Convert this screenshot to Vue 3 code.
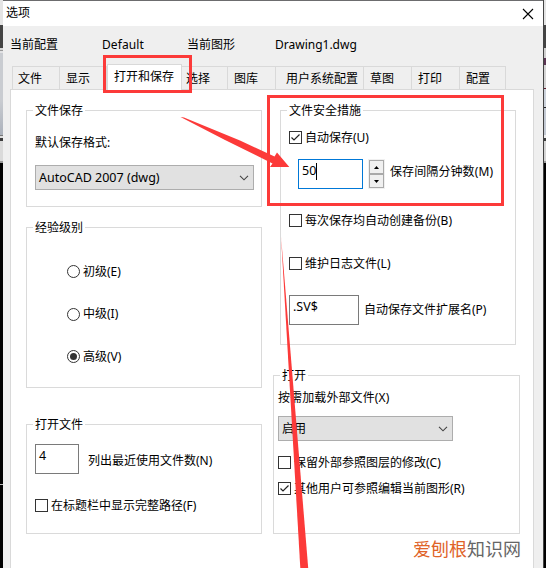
<script setup>
import { ref } from 'vue'

const tabs = [
  { label: '文件', cls: 't-file' },
  { label: '显示', cls: 't-view' },
  { label: '打开和保存', cls: 't-open active' },
  { label: '选择', cls: 't-select' },
  { label: '图库', cls: 't-gallery' },
  { label: '用户系统配置', cls: 't-user' },
  { label: '草图', cls: 't-draft' },
  { label: '打印', cls: 't-print' },
  { label: '配置', cls: 't-profile' },
]
const levels = ['初级(E)', '中级(I)', '高级(V)']
const level = ref('高级(V)')
</script>

<template>
  <div class="screen">
    <div class="edge edge-left"></div>
    <main class="dialog">
      <header class="title">
        <span>选项</span>
        <svg width="12" height="12" viewBox="0 0 12 12"><path d="M1 1L11 11M11 1L1 11" /></svg>
      </header>
      <div class="info">
        <span class="c1">当前配置</span><span class="c2">Default</span>
        <span class="c3">当前图形</span><span class="dwg">Drawing1.dwg</span>
      </div>
      <nav class="tabs">
        <div v-for="t in tabs" :key="t.label" class="tab" :class="t.cls">{{ t.label }}</div>
      </nav>
      <section class="page">
        <div class="col left">
          <div class="group g-save">
            <h3>文件保存</h3>
            <p class="fmt">默认保存格式:</p>
            <div class="select wide">
              <span class="cad">AutoCAD 2007 (dwg)</span>
              <svg width="10" height="6" viewBox="0 0 10 6"><path d="M1 .8L5 4.8L9 .8" /></svg>
            </div>
          </div>
          <div class="group g-level">
            <h3>经验级别</h3>
            <div class="radios">
              <div v-for="l in levels" :key="l" class="opt" @click="level = l">
                <i class="radio" :class="{ on: level === l }"></i><span>{{ l }}</span>
              </div>
            </div>
          </div>
          <div class="group g-files">
            <h3>打开文件</h3>
            <div class="line">
              <div class="input num lat">4</div>
              <span class="recent">列出最近使用文件数(N)</span>
            </div>
            <div class="opt path"><i class="check"></i><span>在标题栏中显示完整路径(F)</span></div>
          </div>
        </div>
        <div class="col right">
          <div class="group g-safe">
            <h3>文件安全措施</h3>
            <div class="opt auto">
              <i class="check"><svg width="11" height="11" viewBox="0 0 11 11"><path d="M1.5 5.5L4 8L9.5 2.5" /></svg></i>
              <span>自动保存(U)</span>
            </div>
            <div class="line interval">
              <div class="input focus lat">50<b class="caret"></b></div>
              <div class="spin">
                <i><svg width="5" height="3" viewBox="0 0 5 3"><path d="M0 3L2.5 0L5 3Z" /></svg></i>
                <i><svg width="5" height="3" viewBox="0 0 5 3"><path d="M0 0L2.5 3L5 0Z" /></svg></i>
              </div>
              <span class="mins">保存间隔分钟数(M)</span>
            </div>
            <div class="opt backup"><i class="check"></i><span>每次保存均自动创建备份(B)</span></div>
            <div class="opt log"><i class="check"></i><span>维护日志文件(L)</span></div>
            <div class="line extrow">
              <div class="input ext lat">.SV$</div>
              <span class="extname">自动保存文件扩展名(P)</span>
            </div>
          </div>
          <div class="group g-open">
            <h3>打开</h3>
            <p class="demand">按需加载外部文件(X)</p>
            <div class="select short">
              <span>启用</span>
              <svg width="10" height="6" viewBox="0 0 10 6"><path d="M1 .8L5 4.8L9 .8" /></svg>
            </div>
            <div class="opt keep"><i class="check"></i><span>保留外部参照图层的修改(C)</span></div>
            <div class="opt others">
              <i class="check"><svg width="11" height="11" viewBox="0 0 11 11"><path d="M1.5 5.5L4 8L9.5 2.5" /></svg></i>
              <span>其他用户可参照编辑当前图形(R)</span>
            </div>
          </div>
          <div class="brand"><b>爱刨根</b>知识网</div>
        </div>
      </section>
    </main>
    <div class="edge edge-right"></div>
    <svg class="marks" width="546" height="568" viewBox="0 0 546 568">
      <rect x="104.5" y="56.5" width="86" height="35" />
      <rect x="268.5" y="96.5" width="234" height="108" />
      <path d="M180.5 117L184 117.5L240 140.5L274.5 156.5L277 152.5L289.3 167L270 167L272.5 163.5L225 140Z" />
      <path d="M281 236L308.2 568L300.3 568Z" />
    </svg>
  </div>
</template>

<style>
body { margin: 0; overflow: hidden; }
</style>

<style scoped>
* { box-sizing: border-box; }
.screen {
  position: relative; display: flex; width: 546px; height: 568px; overflow: hidden;
  font-family: "Noto Sans", "Noto Sans CJK SC", sans-serif;
  font-size: 12px; line-height: 16px; color: #000; white-space: nowrap;
}
.edge { width: 3px; flex: none; }
.edge-left {
  background: linear-gradient(#e4e4e4 0 25px, #444 25px 48px, #d8d8d8 48px 50px, #999 50px 51px, #e2e2e4 51px 53px, #c9ccd1 53px 100px, #abb1bb 135px, #777 135px 136px, #ddd 136px 138px, #3c3c3c 138px 141px, #dadada 141px 161px, #999 161px 163px, #000 163px 484px, #bbb 484px 485px, #000 485px);
}
.edge-right {
  border-left: 1px solid #444;
  background: linear-gradient(#e4e4e4 0 25px, #444 25px 48px, #d0d0d0 48px 58px, #5b3553 58px 65px, #d5d5d5 65px 88px, #611d30 88px 89px, #ccd2db 89px 107px, #222 107px 108px, #c4cad4 108px 135px, #eee 135px 138px, #3c3c3c 138px 141px, #d5d5d5 141px 161px, #999 161px 163px, #000 163px);
}
.dialog { display: flex; flex-direction: column; width: 540px; height: 568px; background: #efefef; border-top: 1px solid #6c6c6e; }
.title { display: flex; align-items: center; justify-content: space-between; height: 25px; padding: 0 9px 2px 3px; background: #fff; }
.title svg { display: block; margin-top: 2px; fill: none; stroke: #000; stroke-width: 1.1; }
.info { display: flex; align-items: center; height: 38px; padding-left: 7px; }
.c1 { width: 92px; }
.c2 { width: 85px; letter-spacing: .1px; }
.c3 { width: 88px; }
.cad { font-size: 12.5px; }
.lat { font-size: 12.5px; }
.tabs { display: flex; align-items: flex-end; height: 25px; padding-left: 9px; }
.tab { height: 23px; padding: 4px 0 0 6px; border: 1px solid #d9d9d9; border-bottom: 0; border-left: 0; line-height: 16px; }
.t-file { width: 48px; border-left: 1px solid #d9d9d9; padding-left: 5px; }
.t-view { width: 47px; }
.t-open { width: 75px; height: 26px; margin-bottom: -1px; }
.active { background: #fff; position: relative; border-left: 1px solid #d9d9d9; padding-left: 6px; }
.t-select { width: 46px; padding-left: 4px; }
.t-gallery { width: 48px; }
.t-user { width: 88px; padding-left: 10px; }
.t-draft, .t-print { width: 48px; }
.t-profile { width: 46px; }
.page { display: flex; width: 524px; height: 479px; margin-left: 7px; padding: 20px 0 0 15px; background: #fff; border: 1px solid #d9d9d9; border-bottom: 0; }
.col { display: flex; flex-direction: column; }
.left { width: 247px; }
.group { display: flex; flex-direction: column; align-items: flex-start; width: 236px; border: 1px solid #dadada; padding-left: 8px; }
h3 { margin: -9px 0 0 -2px; padding: 0 2px; height: 17px; background: #fff; font-size: 12px; font-weight: 400; line-height: 17px; }
p { margin: 0; }
.g-save { height: 97px; }
.fmt { margin-top: 16px; }
.select { display: flex; align-items: center; justify-content: space-between; height: 25px; padding: 0 4px 0 3px; background: #e1e1e1; border: 1px solid #adadad; }
.select svg { fill: none; stroke: #444; stroke-width: 1.1; }
.wide { width: 219px; margin-top: 14px; }
.g-level { height: 161px; margin-top: 20px; }
.radios { display: flex; flex-direction: column; gap: 27.5px; margin: 28px 0 0 32px; }
.opt { display: flex; align-items: center; gap: 3px; height: 15px; }
.radio { display: flex; align-items: center; justify-content: center; width: 13px; height: 13px; border: 1px solid #333; border-radius: 50%; }
.radio.on::after { content: ""; width: 7px; height: 7px; border-radius: 50%; background: #333; }
.check { display: block; width: 13px; height: 13px; border: 1px solid #333; background: #fff; }
.check svg { display: block; fill: none; stroke: #222; stroke-width: 1.2; }
.g-files { height: 110px; margin-top: 36px; }
.line { display: flex; }
.input { height: 30px; padding: 3px 0 0 3px; border: 1px solid #7a7a7a; background: #fff; }
.num { width: 44px; margin-top: 11px; }
.recent { margin: 20px 0 0 9px; }
.path { margin-top: 24px; }
.g-safe { height: 235px; margin-left: 7px; }
.auto { margin-top: 11px; }
.interval { margin: 14px 0 0 9px; }
.focus { display: flex; width: 65px; border-color: #0078d7; }
.caret { width: 1px; height: 17px; background: #000; }
.spin { display: flex; flex-direction: column; width: 17px; height: 30px; margin-left: 5px; padding: 1px; background: #f0f0f0; }
.spin i { display: flex; align-items: center; justify-content: center; height: 14px; border: 1px solid #a9a9a9; }
.mins { margin: 5px 0 0 5px; letter-spacing: .1px; }
.backup { margin-top: 24px; }
.log { margin-top: 28px; }
.extrow { margin-top: 24px; }
.ext { width: 70px; }
.extname { margin: 7px 0 0 5px; }
.g-open { width: 247px; height: 159px; margin-top: 30px; padding-left: 4px; }
.g-open h3 { margin-left: 2px; }
.demand { margin-top: 6px; letter-spacing: .1px; }
.short { width: 175px; margin-top: 10px; }
.keep { margin-top: 14px; }
.others { margin-top: 11px; }
.brand { margin: 3px 0 0 140px; font-size: 18px; line-height: 24px; color: #666; }
.brand b { font-weight: 400; color: #e06328; }
.marks { position: absolute; left: 0; top: 0; pointer-events: none; }
.marks rect { fill: none; stroke: #fc3a39; stroke-width: 3; }
.marks path { fill: #fc3a39; }
</style>
